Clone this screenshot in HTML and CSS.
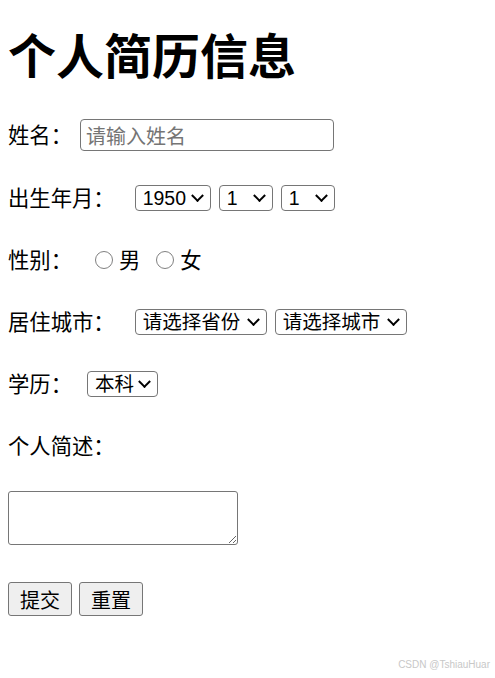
FILE: index.html
```html
<!DOCTYPE html>
<html lang="zh-CN">
<head>
    <meta charset="UTF-8">
    <meta name="viewport" content="width=device-width, initial-scale=1.0">
    <title>个人简历信息</title>
    <link rel="stylesheet" href="styles.css">
</head>
<body>
    <h1>个人简历信息</h1>

    <form class="resume">
        <div class="row row-first">
            <label for="name">姓名：</label>
            <input type="text" id="name" class="text-input" placeholder="请输入姓名">
        </div>

        <div class="row">
            <label>出生年月：</label>
            <span class="pick gap-wide">
                <select class="sel sel-year">
                    <option>1950</option>
                    <option>1951</option>
                </select>
            </span>
            <span class="pick">
                <select class="sel sel-small">
                    <option>1</option>
                    <option>12</option>
                </select>
            </span>
            <span class="pick">
                <select class="sel sel-small">
                    <option>1</option>
                    <option>31</option>
                </select>
            </span>
        </div>

        <div class="row">
            <label>性别：</label>
            <input type="radio" name="sex" id="male" class="radio gap-radio">
            <label for="male" class="radio-text">男</label>
            <input type="radio" name="sex" id="female" class="radio">
            <label for="female">女</label>
        </div>

        <div class="row">
            <label>居住城市：</label>
            <span class="pick gap-wide">
                <select class="sel sel-city">
                    <option>请选择省份</option>
                </select>
            </span>
            <span class="pick">
                <select class="sel sel-city">
                    <option>请选择城市</option>
                </select>
            </span>
        </div>

        <div class="row">
            <label>学历：</label>
            <span class="pick gap-mid">
                <select class="sel sel-edu">
                    <option>本科</option>
                    <option>硕士</option>
                    <option>博士</option>
                </select>
            </span>
        </div>

        <div class="row">
            <label for="intro">个人简述：</label>
        </div>

        <textarea id="intro" class="intro"></textarea>

        <div class="actions">
            <button type="submit" class="btn">提交</button>
            <button type="reset" class="btn">重置</button>
        </div>
    </form>

    <div class="watermark">CSDN @TshiauHuar</div>
</body>
</html>
```

FILE: styles.css
```css
body {
    margin: 0 8px;
    font-family: "Noto Sans CJK SC", "Liberation Sans", sans-serif;
    font-size: 21.33px;
    color: #000;
    background: #fff;
}

h1 {
    font-size: 48px;
    line-height: 56px;
    margin: 25px 0 22px;
}

.row {
    display: flex;
    align-items: center;
    height: 62px;
}

.row-first {
    height: 64px;
}

.row label {
    margin-bottom: 4px;
}

.text-input {
    width: 254px;
    height: 32px;
    box-sizing: border-box;
    margin-left: 8px;
    padding: 0 5px;
    border: 1px solid #767676;
    border-radius: 4px;
    font-family: "Noto Sans CJK SC", sans-serif;
    font-size: 20px;
}

.text-input::placeholder {
    color: #757575;
}

/* select with a drawn chevron */
.pick {
    position: relative;
    display: inline-flex;
    margin-right: 8px;
}

.pick::after {
    content: "";
    position: absolute;
    right: 9px;
    top: 50%;
    width: 7px;
    height: 7px;
    border-right: 2px solid #000;
    border-bottom: 2px solid #000;
    transform: translateY(-75%) rotate(45deg);
    pointer-events: none;
}

.sel {
    appearance: none;
    height: 26px;
    box-sizing: border-box;
    margin: 0;
    padding: 0 0 0 7px;
    border: 1px solid #767676;
    border-radius: 4px;
    background: #fff;
    color: #000;
    font-family: "Liberation Sans", "Noto Sans CJK SC", sans-serif;
    font-size: 19.5px;
}

.sel-year { width: 76px; }
.sel-small { width: 54px; }
.sel-city { width: 132px; }
.sel-edu { width: 71px; }

.gap-wide { margin-left: 20px; }
.gap-mid { margin-left: 15px; }

.radio {
    appearance: none;
    flex: none;
    width: 18px;
    height: 18px;
    margin: 0 6px 0 0;
    border: 1.5px solid #808080;
    border-radius: 50%;
    background: #fff;
}

.gap-radio { margin-left: 23px; }

.radio-text {
    margin-right: 16px;
}

.intro {
    display: block;
    width: 230px;
    height: 54px;
    box-sizing: border-box;
    margin: 14px 0 0;
    border: 1px solid #767676;
    border-radius: 3px;
}

.actions {
    display: flex;
    gap: 7px;
    margin-top: 37px;
}

.btn {
    width: 64px;
    height: 34px;
    padding: 0;
    border: 1px solid #767676;
    border-radius: 3px;
    background-color: #efefef;
    color: #000;
    font-family: "Noto Sans CJK SC", sans-serif;
    font-size: 20px;
}

.watermark {
    position: absolute;
    right: 5px;
    top: 659px;
    font-family: "Liberation Sans", sans-serif;
    font-size: 10px;
    color: #c8c8c8;
}
```
